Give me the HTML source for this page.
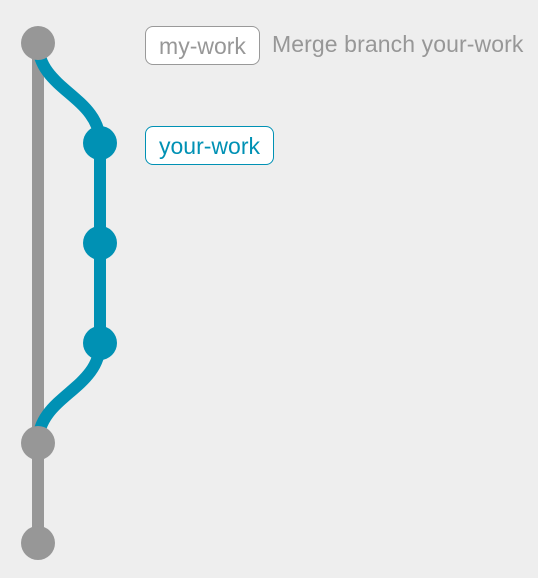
<!DOCTYPE html>
<html><head><style>
body{margin:0;width:538px;height:578px;background:#eeeeee;overflow:hidden;position:relative;font-family:"Liberation Sans",sans-serif}
.tag{position:absolute;background:#fff;border:1px solid #999;border-radius:8px;font-size:23px;box-sizing:border-box;text-align:center}
</style></head><body>
<svg width="538" height="578" style="position:absolute;left:0;top:0">
<line x1="38" y1="43" x2="38" y2="543" stroke="#979797" stroke-width="12"/>
<path d="M38 43 C38 90 100 96 100 143 L100 343 C100 390 38 396 38 443" fill="none" stroke="#0091b4" stroke-width="12"/>
<circle cx="38" cy="43" r="17" fill="#979797"/>
<circle cx="100" cy="143" r="17" fill="#0091b4"/>
<circle cx="100" cy="243" r="17" fill="#0091b4"/>
<circle cx="100" cy="343" r="17" fill="#0091b4"/>
<circle cx="38" cy="443" r="17" fill="#979797"/>
<circle cx="38" cy="543" r="17" fill="#979797"/>
</svg>
<div class="tag" style="left:145px;top:26px;width:115px;height:39px;line-height:38px;color:#979797">my-work</div>
<div style="position:absolute;left:272px;top:31px;font-size:23px;color:#979797;letter-spacing:0.1px">Merge branch your-work</div>
<div class="tag" style="left:145px;top:126px;width:129px;height:39px;line-height:38px;color:#0091b4;border-color:#0091b4">your-work</div>
</body></html>
